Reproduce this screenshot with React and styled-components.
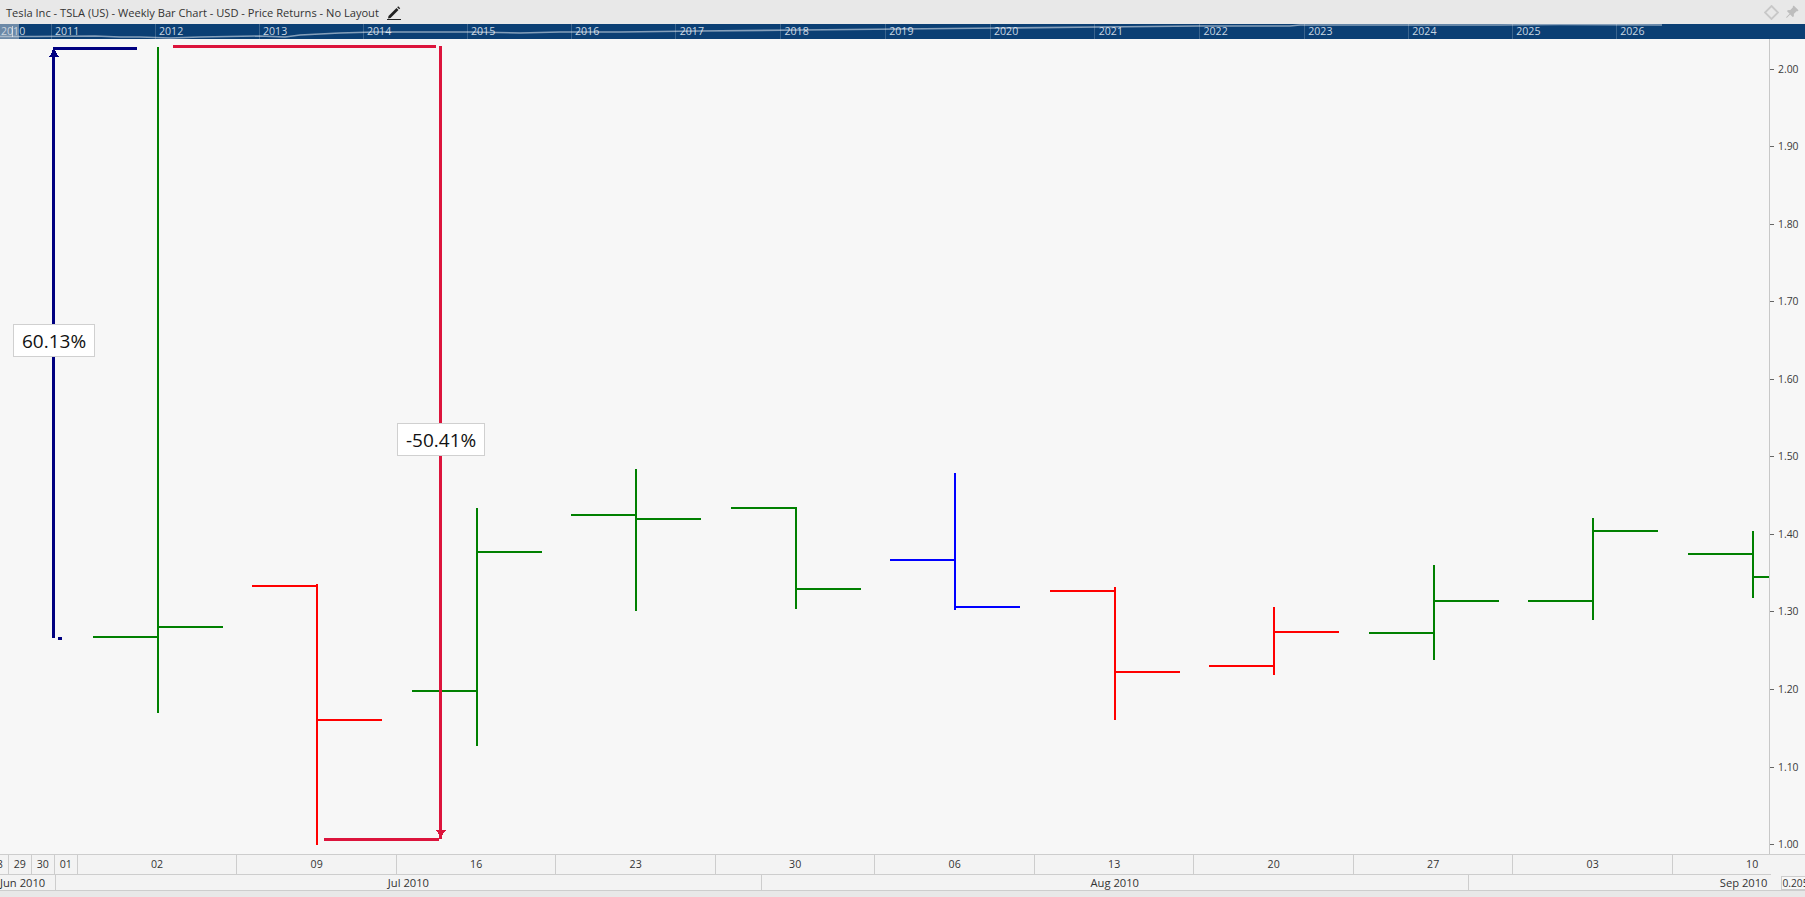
import styled, { createGlobalStyle } from "styled-components";
import { BsPinAngleFill } from "react-icons/bs";

const GlobalStyle = createGlobalStyle`
  html, body {
    margin: 0;
    padding: 0;
    background: #e8e8e8;
  }
  * {
    box-sizing: border-box;
  }
`;

const Page = styled.div`
  display: flex;
  flex-direction: column;
  width: 1805px;
  height: 897px;
  overflow: hidden;
  background: #e8e8e8;
  color: #333;
  font-family: "Open Sans", "Noto Sans", sans-serif;
  font-size: 11px;
`;

const TitleBar = styled.header`
  display: flex;
  align-items: center;
  height: 24px;
  padding: 0 6px;
  font-size: 11.1px;
`;

const TitleText = styled.span`
  color: #333;
  white-space: nowrap;
`;

const EditIcon = styled.svg`
  width: 14px;
  height: 14px;
  margin-left: 8px;
  margin-top: 1px;
`;

const TitleActions = styled.div`
  display: flex;
  align-items: center;
  gap: 6px;
  margin-left: auto;
`;

const Navigator = styled.div`
  position: relative;
  display: flex;
  height: 15px;
  overflow: hidden;
  background: #0b3f74;
  color: #c9d6e2;
  font-size: 10.6px;
  line-height: 14px;
`;

const YearCell = styled.div`
  flex: 0 0 ${(p) => p.$width}px;
  padding-left: ${(p) => (p.$first ? 1 : 3.5)}px;
  border-left: ${(p) => (p.$first ? "none" : "1px solid #3a648e")};
`;

const NavLine = styled.svg`
  position: absolute;
  inset: 0;
  width: 100%;
  height: 100%;
`;

const NavSelection = styled.div`
  position: absolute;
  left: 0;
  top: 0;
  bottom: 0;
  width: 19px;
  background: rgba(205, 212, 218, 0.5);

  &::after {
    content: "";
    position: absolute;
    left: 12px;
    top: 2px;
    bottom: 2px;
    width: 1px;
    background: rgba(255, 255, 255, 0.6);
  }
`;

const ChartRow = styled.div`
  display: flex;
  height: 815px;
`;

const Plot = styled.div`
  position: relative;
  flex: 0 0 1769px;
  overflow: hidden;
  background: #f7f7f7;
`;

const PlotSvg = styled.svg`
  display: block;
  width: 1769px;
  height: 815px;
`;

const ReturnLabel = styled.div`
  position: absolute;
  left: ${(p) => p.$left}px;
  top: ${(p) => p.$top}px;
  height: 33px;
  padding: 0 8px;
  border: 1px solid #d0d0d0;
  background: #fff;
  color: #111;
  font-size: 19px;
  line-height: 33px;
  white-space: nowrap;
`;

const PriceAxis = styled.div`
  flex: 1;
  display: flex;
  flex-direction: column;
  padding-top: 21.6px;
  overflow: hidden;
  border-left: 1px solid #c8c8c8;
  background: #f7f7f7;
`;

const PriceRow = styled.div`
  flex: 0 0 77.55px;
  display: flex;
  align-items: flex-start;
  gap: 4px;
  height: 77.55px;
  line-height: 16px;
  color: #3a3a3a;
  font-size: 10.4px;
`;

const PriceTick = styled.i`
  flex: 0 0 4px;
  height: 1px;
  margin-top: 8px;
  background: #666;
`;

const TimeAxis = styled.footer`
  flex: 0 0 37px;
  display: flex;
  flex-direction: column;
  background: #f3f3f3;
  color: #333;
  font-size: 10.6px;
`;

const DayRow = styled.div`
  height: 20px;
  overflow: hidden;
  border-top: 1px solid #cdcdcd;
`;

const DayTrack = styled.div`
  display: flex;
  width: max-content;
  height: 100%;
  margin-left: -14.2px;
`;

const DayCell = styled.div`
  flex: 0 0 ${(p) => p.$width}px;
  border-right: 1px solid #cdcdcd;
  line-height: 18px;
  text-align: center;
`;

const MonthRow = styled.div`
  display: flex;
  height: 17px;
  border-bottom: 1px solid #cdcdcd;
  font-size: 11.2px;
`;

const MonthTrack = styled.div`
  flex: 0 0 1769px;
  display: flex;
  border-top: 1px solid #cdcdcd;
`;

const MonthCell = styled.div`
  flex: 0 0 ${(p) => p.$width}px;
  padding-right: ${(p) => p.$pad || 0}px;
  border-right: ${(p) => (p.$open ? "none" : "1px solid #cdcdcd")};
  line-height: 15px;
  text-align: ${(p) => p.$align || "center"};
  white-space: nowrap;
`;

const CornerBox = styled.div`
  flex: 0 0 40px;
  height: 14px;
  margin: 2px 0 0 10px;
  padding-left: 1px;
  border: 1px solid #cdcdcd;
  background: #f7f7f7;
  font-size: 10.2px;
  line-height: 13px;
  white-space: nowrap;
`;

const years = [
  ["2011", 104], ["2012", 104], ["2013", 104], ["2014", 104], ["2015", 104], ["2016", 104.75], ["2017", 104.75],
  ["2018", 104.75], ["2019", 104.75], ["2020", 104.75], ["2021", 104.75], ["2022", 104.75], ["2023", 104],
  ["2024", 104], ["2025", 104], ["2026", 104],
];

const days = [
  ["28", 23], ["29", 23], ["30", 23], ["01", 23], ["02", 159.6], ["09", 159.5], ["16", 159.5], ["23", 159.5],
  ["30", 159.5], ["06", 159.5], ["13", 159.5], ["20", 159.5], ["27", 159.5], ["03", 159.5], ["10", 159.5],
];

const prices = ["2.00", "1.90", "1.80", "1.70", "1.60", "1.50", "1.40", "1.30", "1.20", "1.10", "1.00"];

// x stem, top, bottom, open tick [from, y], close tick [to, y]
const bars = [
  { x: 158, top: 47, bottom: 713, open: [93, 637], close: [223, 627], color: "#008000" },
  { x: 317, top: 584, bottom: 845, open: [252, 586], close: [382, 720], color: "#ff0000" },
  { x: 477, top: 508, bottom: 746, open: [412, 691], close: [542, 552], color: "#008000" },
  { x: 636, top: 469, bottom: 611, open: [571, 515], close: [701, 519], color: "#008000" },
  { x: 796, top: 507, bottom: 609, open: [731, 508], close: [861, 589], color: "#008000" },
  { x: 955, top: 473, bottom: 610, open: [890, 560], close: [1020, 607], color: "#0000ff" },
  { x: 1115, top: 587, bottom: 720, open: [1050, 591], close: [1180, 672], color: "#ff0000" },
  { x: 1274, top: 607, bottom: 675, open: [1209, 666], close: [1339, 632], color: "#ff0000" },
  { x: 1434, top: 565, bottom: 660, open: [1369, 633], close: [1499, 601], color: "#008000" },
  { x: 1593, top: 518, bottom: 620, open: [1528, 601], close: [1658, 531], color: "#008000" },
  { x: 1753, top: 531, bottom: 598, open: [1688, 554], close: [1769, 577], color: "#008000" },
];

const navPoints =
  "0,12.5 35,12.5 95,12 120,13 140,13 170,14 200,13 260,12 285,13 300,11 340,9 375,8 420,8 470,8 520,9 560,8 620,8 700,7 800,6 900,5 1000,4 1100,3 1200,2 1290,2 1300,1 1400,1 1500,1 1560,0.5 1662,1";

function Bar({ bar }) {
  return (
    <g stroke={bar.color} strokeWidth="2">
      <line x1={bar.x} y1={bar.top} x2={bar.x} y2={bar.bottom} />
      <line x1={bar.open[0]} y1={bar.open[1]} x2={bar.x} y2={bar.open[1]} />
      <line x1={bar.x} y1={bar.close[1]} x2={bar.close[0]} y2={bar.close[1]} />
    </g>
  );
}

export default function App() {
  return (
    <Page>
      <GlobalStyle />
      <TitleBar>
        <TitleText>Tesla Inc - TSLA (US) - Weekly Bar Chart - USD - Price Returns - No Layout</TitleText>
        <EditIcon viewBox="0 0 14 14">
          <path d="M1.5 10 L9.5 2 L11.5 4 L3.5 12 L1 12.5 Z" fill="#222" />
          <path d="M10.2 1.3 L11.2 0.3 L13.2 2.3 L12.2 3.3 Z" fill="#222" />
          <rect x="0" y="13" width="14" height="1" fill="#222" />
        </EditIcon>
        <TitleActions>
          <svg width="15" height="15" viewBox="0 0 15 15">
            <path d="M7.5 1 L14 7.5 L7.5 14 L1 7.5 Z" fill="none" stroke="#c8c8c8" strokeWidth="1.8" />
          </svg>
          <BsPinAngleFill size={14} color="#bdbdbd" />
        </TitleActions>
      </TitleBar>

      <Navigator>
        <YearCell $first $width={50.5}>2010</YearCell>
        {years.map(([year, width]) => (
          <YearCell key={year} $width={width}>{year}</YearCell>
        ))}
        <NavLine viewBox="0 0 1805 15" preserveAspectRatio="none">
          <polyline points={navPoints} fill="none" stroke="rgba(255,255,255,0.5)" strokeWidth="1.6" />
        </NavLine>
        <NavSelection />
      </Navigator>

      <ChartRow>
        <Plot>
          <PlotSvg viewBox="0 39 1769 815">
            <g shapeRendering="crispEdges">
              {bars.map((bar) => (
                <Bar key={bar.x} bar={bar} />
              ))}
              <g fill="#000080">
                <rect x="52" y="50" width="3" height="588" />
                <rect x="53" y="47" width="84" height="3" />
                <rect x="58" y="637" width="4" height="3" />
                <path d="M49 57 L54 49 L59 57 Z" />
              </g>
              <g fill="#dc143c">
                <rect x="173" y="45" width="263" height="3" />
                <rect x="439" y="46" width="3" height="793" />
                <rect x="324" y="838" width="115" height="3" />
                <path d="M436 830 L446 830 L441 837 Z" />
              </g>
            </g>
          </PlotSvg>
          <ReturnLabel $left={13} $top={285}>60.13%</ReturnLabel>
          <ReturnLabel $left={397} $top={384}>-50.41%</ReturnLabel>
        </Plot>
        <PriceAxis>
          {prices.map((price) => (
            <PriceRow key={price}>
              <PriceTick />
              {price}
            </PriceRow>
          ))}
        </PriceAxis>
      </ChartRow>

      <TimeAxis>
        <DayRow>
          <DayTrack>
            {days.map(([label, width], i) => (
              <DayCell key={i} $width={width}>{label}</DayCell>
            ))}
          </DayTrack>
        </DayRow>
        <MonthRow>
          <MonthTrack>
            <MonthCell $width={54.7} $pad={10} $align="right">Jun 2010</MonthCell>
            <MonthCell $width={705.3}>Jul 2010</MonthCell>
            <MonthCell $width={707.5}>Aug 2010</MonthCell>
            <MonthCell $width={301.5} $pad={3} $align="right" $open>Sep 2010</MonthCell>
          </MonthTrack>
          <CornerBox>0.205</CornerBox>
        </MonthRow>
      </TimeAxis>
    </Page>
  );
}
